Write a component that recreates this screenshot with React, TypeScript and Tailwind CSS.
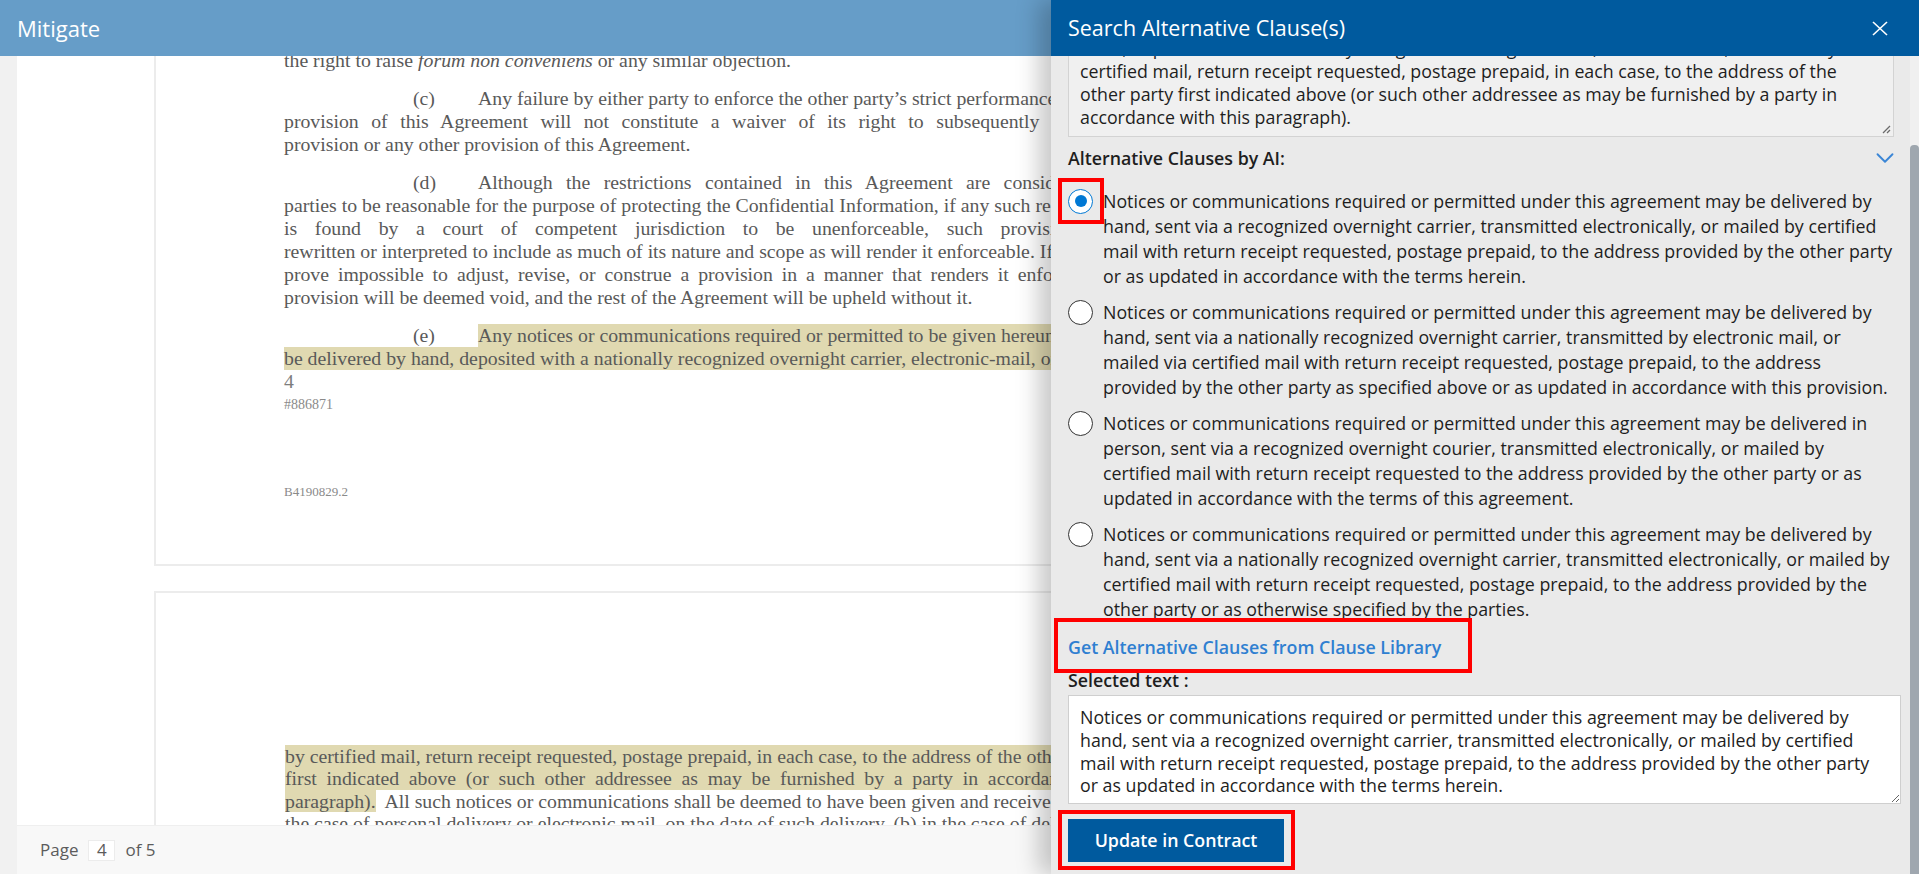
import React from 'react';
import { ChevronDown } from 'lucide-react';

const clauses: string[][] = [
  [
    'Notices or communications required or permitted under this agreement may be delivered by',
    'hand, sent via a recognized overnight carrier, transmitted electronically, or mailed by certified',
    'mail with return receipt requested, postage prepaid, to the address provided by the other party',
    'or as updated in accordance with the terms herein.',
  ],
  [
    'Notices or communications required or permitted under this agreement may be delivered by',
    'hand, sent via a nationally recognized overnight carrier, transmitted by electronic mail, or',
    'mailed via certified mail with return receipt requested, postage prepaid, to the address',
    'provided by the other party as specified above or as updated in accordance with this provision.',
  ],
  [
    'Notices or communications required or permitted under this agreement may be delivered in',
    'person, sent via a recognized overnight courier, transmitted electronically, or mailed by',
    'certified mail with return receipt requested to the address provided by the other party or as',
    'updated in accordance with the terms of this agreement.',
  ],
  [
    'Notices or communications required or permitted under this agreement may be delivered by',
    'hand, sent via a nationally recognized overnight carrier, transmitted electronically, or mailed by',
    'certified mail with return receipt requested, postage prepaid, to the address provided by the',
    'other party or as otherwise specified by the parties.',
  ],
];

const originalText =
  'Any notices or communications required or permitted to be given hereunder shall be in writing and may be delivered by\n' +
  'hand, deposited with a nationally recognized overnight carrier, electronic-mail, or mailed by\n' +
  'certified mail, return receipt requested, postage prepaid, in each case, to the address of the\n' +
  'other party first indicated above (or such other addressee as may be furnished by a party in\n' +
  'accordance with this paragraph).';

// justify = stretched line, otherwise natural spacing
const Line = ({ children, justify, hl }: { children: React.ReactNode; justify?: boolean; hl?: boolean }) => (
  <div
    className={`whitespace-nowrap ${justify ? 'text-justify [text-align-last:justify]' : ''} ${hl ? 'bg-[#e0d9b1]' : ''}`}
  >
    {children}
  </div>
);

const Labeled = ({
  label,
  children,
  hl,
  justify,
}: {
  label: string;
  children: React.ReactNode;
  hl?: boolean;
  justify?: boolean;
}) => (
  <div className="flex">
    <span className="w-[194px] shrink-0 pl-[129px]">{label}</span>
    <span
      className={`flex-1 whitespace-nowrap ${justify ? 'text-justify [text-align-last:justify]' : ''} ${
        hl ? 'bg-[#e0d9b1]' : ''
      }`}
    >
      {children}
    </span>
  </div>
);

const DocViewer = () => (
  <div className="flex-1 overflow-hidden">
    <div className="-mt-[7.5px] pl-[137px] font-['Liberation_Serif',serif] text-[19.8px] text-[#595959]">
      {/* page 4 */}
      <div className="w-[1136px] border-l-2 border-b-2 border-[#ececec] bg-white pl-[128px] pr-[130px] pb-[62px] leading-[23px]">
        <Line>
          the right to raise <i>forum non conveniens</i> or any similar objection.
        </Line>
        <div className="mt-[15px]">
          <Labeled label="(c)">Any failure by either party to enforce the other party’s strict performance of any</Labeled>
          <Line justify>provision of this Agreement will not constitute a waiver of its right to subsequently enforce such</Line>
          <Line>provision or any other provision of this Agreement.</Line>
        </div>
        <div className="mt-[15px]">
          <Labeled label="(d)" justify>
            Although the restrictions contained in this Agreement are considered by the
          </Labeled>
          <Line>parties to be reasonable for the purpose of protecting the Confidential Information, if any such restriction</Line>
          <Line justify>is found by a court of competent jurisdiction to be unenforceable, such provision will be</Line>
          <Line>rewritten or interpreted to include as much of its nature and scope as will render it enforceable. If it should</Line>
          <Line justify>prove impossible to adjust, revise, or construe a provision in a manner that renders it enforceable, such</Line>
          <Line>provision will be deemed void, and the rest of the Agreement will be upheld without it.</Line>
        </div>
        <div className="mt-[15px]">
          <Labeled label="(e)" hl>
            Any notices or communications required or permitted to be given hereunder shall be in writing and may
          </Labeled>
          <Line hl>be delivered by hand, deposited with a nationally recognized overnight carrier, electronic-mail, or mailed</Line>
        </div>
        <div className="text-[#7d7d7d]">4</div>
        <div className="text-[14px] text-[#8a8a8a]">#886871</div>
        <div className="mt-[66px] text-[13px] leading-[20px] text-[#8a8a8a]">B4190829.2</div>
      </div>
      {/* page 5 */}
      <div className="mt-[25px] w-[1136px] border-l-2 border-t-2 border-[#ececec] bg-white pl-[129px] pr-[130px] pt-[152px] pb-[200px] leading-[22.5px]">
        <Line hl>by certified mail, return receipt requested, postage prepaid, in each case, to the address of the other party</Line>
        <Line hl justify>first indicated above (or such other addressee as may be furnished by a party in accordance with this</Line>
        <Line>
          <span className="bg-[#e0d9b1]">paragraph).</span>&nbsp; All such notices or communications shall be deemed to have been given and received (a) in
        </Line>
        <Line>the case of personal delivery or electronic mail, on the date of such delivery, (b) in the case of delivery</Line>
      </div>
    </div>
  </div>
);

const Radio = ({ checked }: { checked?: boolean }) => (
  <span
    className={`flex h-[25px] w-[25px] shrink-0 items-center justify-center rounded-full bg-white ${
      checked ? 'border-[1.5px] border-[#0078d4]' : 'border border-[#333333]'
    }`}
  >
    {checked && <span className="h-[12px] w-[12px] rounded-full bg-[#0078d4]" />}
  </span>
);

const Grip = () => (
  <svg className="absolute bottom-[2px] right-[2px]" width="10" height="10" viewBox="0 0 10 10">
    <line x1="9" y1="2" x2="2" y2="9" stroke="#6b6b6b" strokeWidth="1.2" />
    <line x1="9" y1="6" x2="6" y2="9" stroke="#6b6b6b" strokeWidth="1.2" />
  </svg>
);

const Panel = () => (
  <div className="absolute right-0 top-0 bottom-0 flex w-[868px] flex-col bg-[#eaeaea] font-['Open_Sans',sans-serif] text-[#1e1e1e] shadow-[-12px_0_22px_rgba(0,0,0,0.22)]">
    <div className="flex h-[56px] shrink-0 items-center justify-between bg-[#005a9e] pl-[17px] pr-[31px]">
      <span className="text-[21.5px] text-white">Search Alternative Clause(s)</span>
      <svg width="16" height="15" viewBox="0 0 16 15">
        <line x1="1" y1="1" x2="15" y2="14" stroke="white" strokeWidth="1.6" />
        <line x1="15" y1="1" x2="1" y2="14" stroke="white" strokeWidth="1.6" />
      </svg>
    </div>
    <div className="flex min-h-0 flex-1">
      <div className="min-w-0 flex-1 overflow-hidden pl-[17px] pr-[9px] text-[17.8px]">
        <div className="flex h-[81px] flex-col justify-end overflow-hidden pr-[7px]">
          <div className="relative shrink-0 whitespace-pre-line border border-[#d3d3d3] bg-[#f0f0f0] px-[11px] pt-[8px] pb-[7px] leading-[23px]">
            {originalText}
            <Grip />
          </div>
        </div>

        <div className="mt-[6.5px] flex items-center justify-between leading-[25px]">
          <span className="font-semibold">Alternative Clauses by AI:</span>
          <ChevronDown size={30} strokeWidth={1.5} className="mr-[1px] -translate-y-[1px] text-[#3b86d6]" />
        </div>

        <div className="mt-[15px] flex flex-col gap-[11px] leading-[25px]">
          {clauses.map((lines, i) => (
            <div key={i} className="flex items-start gap-[10px]">
              <span className="relative">
                <Radio checked={i === 0} />
                {i === 0 && (
                  <span className="absolute -left-[10px] -top-[11px] h-[46px] w-[46px] border-[4px] border-[#ff0000]" />
                )}
              </span>
              <div className="whitespace-nowrap">
                {lines.map((l, j) => (
                  <div key={j}>{l}</div>
                ))}
              </div>
            </div>
          ))}
        </div>

        <div className="relative mt-[13px] leading-[25px]">
          <span className="font-semibold text-[#2f7fd1]">Get Alternative Clauses from Clause Library</span>
          <span className="absolute -left-[14px] -top-[17px] h-[55px] w-[418px] border-[4px] border-[#ff0000]" />
        </div>

        <div className="mt-[8px] font-semibold leading-[25px]">Selected text :</div>

        <textarea
          readOnly
          value={clauses[0].join('\n')}
          className="mt-[2.5px] block h-[109px] w-full overflow-hidden border border-[#cfcfcf] bg-white px-[11px] pt-[10px] pb-[6px] text-[17.8px] leading-[22.75px] text-[#1e1e1e] outline-none"
        />

        <div className="relative mt-[15px] w-[216px]">
          <button className="flex h-[43px] w-[216px] items-center justify-center bg-[#005a9e] text-[17.8px] font-semibold text-white">
            Update in Contract
          </button>
          <span className="absolute -left-[10px] -top-[9px] h-[60px] w-[237px] border-[4px] border-[#ff0000]" />
        </div>
      </div>
      <div className="flex w-[9px] shrink-0 flex-col bg-[#f0f0f0]">
        <div className="mt-[89px] flex-1 rounded-t-[4px] bg-[#9fa7af]" />
      </div>
    </div>
  </div>
);

export default function App() {
  return (
    <div className="relative h-[874px] w-[1919px] overflow-hidden bg-white">
      <div className="flex h-full flex-col">
        <div className="flex h-[56px] shrink-0 items-center bg-[#669dc8] pl-[17px] font-['Open_Sans',sans-serif] text-[22px] text-white">
          Mitigate
        </div>
        <div className="flex min-h-0 flex-1">
          <div className="w-[17px] shrink-0 bg-[#f1f1f1]" />
          <div className="flex min-w-0 flex-1 flex-col bg-white">
            <DocViewer />
            <div className="flex h-[49px] shrink-0 items-center border-t border-[#efefef] bg-[#f8f8f8] pl-[23px] font-['Open_Sans',sans-serif] text-[17px] text-[#5c5c5c]">
              <span>Page</span>
              <span className="ml-[10px] flex h-[21px] w-[27px] items-center justify-center border border-[#ececec] bg-white">4</span>
              <span className="ml-[10px]">of 5</span>
            </div>
          </div>
        </div>
      </div>
      <Panel />
    </div>
  );
}
